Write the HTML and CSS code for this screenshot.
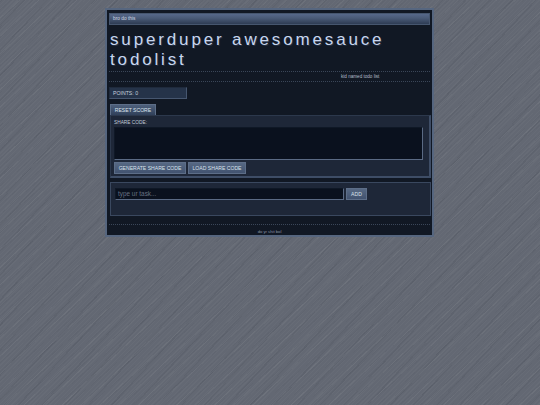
FILE: index.html
```html
<!DOCTYPE html>
<html lang="en">
<head>
<meta charset="utf-8">
<title>superduper awesomesauce todolist</title>
<link rel="stylesheet" href="styles.css">
</head>
<body>
<main class="window">
  <div class="titlebar">bro do this</div>
  <h1 class="title">superduper awesomesauce todolist</h1>
  <div class="tagline"><span>kid named todo list</span></div>
  <div class="points">POINTS: 0</div>
  <button class="btn reset">RESET SCORE</button>
  <section class="share">
    <label class="share-label">SHARE CODE:</label>
    <div class="share-code"></div>
    <div class="share-actions">
      <button class="btn generate">GENERATE SHARE CODE</button>
      <button class="btn load">LOAD SHARE CODE</button>
    </div>
  </section>
  <section class="add">
    <div class="task-input">type ur task...</div>
    <button class="btn add-btn">ADD</button>
  </section>
  <footer class="footer">do yr shit bol</footer>
</main>
</body>
</html>
```
FILE: styles.css
```css
* { box-sizing: border-box; }
html, body { height: 100%; }
body {
  margin: 0;
  padding: 8px 1px 0 0;
  font-family: "Liberation Sans", Arial, sans-serif;
  background-color: #636873;
  background-image:
    repeating-linear-gradient(137deg, rgba(255,255,255,.04) 0 1px, transparent 1px 13px),
    repeating-linear-gradient(133deg, rgba(30,35,45,.07) 0 1.5px, transparent 1.5px 17px),
    repeating-linear-gradient(139deg, rgba(30,35,45,.04) 0 1px, transparent 1px 7px),
    repeating-linear-gradient(135deg, rgba(255,255,255,.025) 0 1px, transparent 1px 3px);
}
.window {
  width: 329px;
  height: 229px;
  margin: 0 auto;
  padding: 3px 2px 0;
  background: #111824;
  border: 2px solid #56667f;
  color: #b8c8e0;
}
.titlebar {
  height: 12px;
  padding-left: 3px;
  font-size: 4.8px;
  line-height: 10px;
  color: #d0d8e6;
  background: linear-gradient(#56688a 0, #4a5b78 40%, #2e3c54 100%);
  border: 1px solid #46566f;
}
.title {
  margin: 5px 0 0 1px;
  font-size: 17px;
  line-height: 20px;
  font-weight: 400;
  letter-spacing: 2.85px;
  color: #c8d6ee;
  text-shadow: 1px 1px 0 #222e42;
}
.tagline {
  height: 11px;
  margin-top: 1px;
  padding-left: 232px;
  font-size: 4.6px;
  line-height: 9px;
  color: #b4bdcb;
  border-top: 1px dotted #3a4658;
  border-bottom: 1px dotted #3a4658;
}
.points {
  width: 78px;
  height: 12px;
  margin-top: 5px;
  padding-left: 3px;
  font-size: 5.2px;
  line-height: 10px;
  color: #c6d0de;
  background: #253349;
  border: 1px solid #1f2a3c;
  border-right-color: #46566f;
  border-bottom-color: #46566f;
}
.btn {
  padding: 0;
  height: 12px;
  font-family: inherit;
  font-size: 5.1px;
  line-height: 10px;
  color: #dbe2ec;
  background: linear-gradient(#566883, #425370);
  border: 1px solid #5d6e88;
}
.reset {
  display: block;
  width: 46px;
  height: 11px;
  margin: 5px 0 0 1px;
  background: linear-gradient(#4e607c, #30405a);
  border-bottom: 0;
}
.share {
  height: 63px;
  margin: 0 -1px 0 1px;
  padding: 4px 3px 0;
  background: #1e2738;
  border: 1px solid #2c384c;
  border-right: 2px solid #3e4d66;
  border-bottom: 2px solid #3e4d66;
}
.share-label {
  display: block;
  font-size: 4.8px;
  line-height: 6px;
  color: #c0cad8;
}
.share-code {
  width: 309px;
  height: 33px;
  margin-top: 1px;
  background: #0a111e;
  border: 1px solid #0f1826;
  border-right-color: #5a6a84;
  border-bottom-color: #5a6a84;
}
.share-actions {
  display: flex;
  gap: 2px;
  margin-top: 2px;
}
.generate { width: 72px; }
.load { width: 58px; }
.add {
  display: flex;
  align-items: flex-start;
  gap: 2px;
  height: 34px;
  margin: 4px -1px 0 1px;
  padding: 5px 4px;
  background: #1e2738;
  border: 1px solid #3a485f;
}
.task-input {
  width: 229px;
  height: 12px;
  padding-left: 2px;
  font-size: 6.4px;
  line-height: 10px;
  color: #667080;
  background: #0a111e;
  border: 1px solid #0f1826;
  border-right-color: #5a6a84;
  border-bottom-color: #5a6a84;
}
.add-btn {
  width: 21px;
}
.footer {
  height: 13px;
  margin-top: 8px;
  padding-top: 3px;
  font-size: 4.2px;
  line-height: 7px;
  text-align: center;
  color: #8a94a4;
  border-top: 1px dotted #3a4658;
}
```
